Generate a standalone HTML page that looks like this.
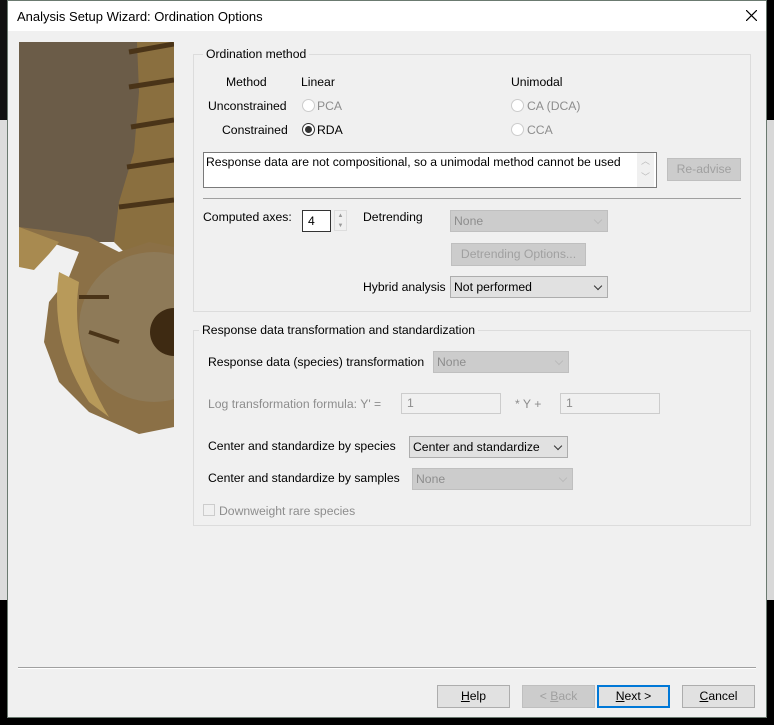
<!DOCTYPE html>
<html><head><meta charset="utf-8"><style>
*{margin:0;padding:0;box-sizing:border-box}
body{width:774px;height:725px;background:#000;position:relative;overflow:hidden;font-family:"Liberation Sans","Noto Sans CJK SC",sans-serif;font-size:12.2px;color:#000}
.a{position:absolute;white-space:nowrap}
.win{position:absolute;left:7px;top:0;width:760px;height:718px;background:#f0f0f0;border:1px solid #6b7a70}
.title{position:absolute;left:0;top:0;width:758px;height:30px;background:#fff}
.grp{position:absolute;border:1px solid #dcdcdc}
.leg{position:absolute;background:#f0f0f0;padding:0 3px;line-height:14px}
.dis{color:#8d8d8d}
.radio{position:absolute;width:13px;height:13px;border-radius:50%;border:1px solid #333;background:#fff}
.radio.d{border-color:#ccc}
.radio.on::after{content:"";position:absolute;left:2px;top:2px;width:7px;height:7px;border-radius:50%;background:#333}
.sel{position:absolute;height:22px;border:1px solid #adadad;background:#e1e1e1;line-height:20px;padding-left:3px}
.sel.d{background:#cccccc;border-color:#bfbfbf;color:#8d8d8d}
.sel::after{content:"";position:absolute;right:6px;top:6px;width:5px;height:5px;border-right:1px solid #333;border-bottom:1px solid #333;transform:rotate(45deg)}
.sel.d::after{border-color:#bbb}
.btn{position:absolute;height:23px;border:1px solid #adadad;background:#e1e1e1;text-align:center;line-height:21px}
.btn.d{background:#cccccc;border-color:#bfbfbf;color:#a0a0a0}
.inp{position:absolute;border:1px solid #ccc;background:#f0f0f0;color:#8d8d8d;line-height:19px;padding-left:5px;height:21px}
</style></head><body>
<div class="a" style="left:0;top:0;width:7px;height:360px;background:#111"></div>
<div class="a" style="left:0;top:120px;width:7px;height:480px;background:#dcdcdc"></div>
<div class="a" style="left:767px;top:120px;width:7px;height:480px;background:#d8d8d8"></div>
<div class="win">
<div class="title"></div>
<div class="a" style="left:9px;top:8px;font-size:13px">Analysis Setup Wizard: Ordination Options</div>
<svg class="a" style="left:738px;top:9px" width="11" height="11"><path d="M0 0L11 11M11 0L0 11" stroke="#000" stroke-width="1.2"/></svg>
<svg class="a" style="left:11px;top:41px" width="155" height="397" viewBox="0 0 155 397">
<rect x="0" y="0" width="155" height="200" fill="#6b5c48"/>
<path d="M118 0 L155 0 L155 205 L110 215 L95 200 L100 160 L115 110 L120 50 Z" fill="#8a6f3f"/>
<path d="M110 10 L155 2 M110 45 L155 38 M112 85 L155 78 M108 125 L155 118 M100 165 L155 158" stroke="#4a3418" stroke-width="5"/>
<path d="M0 185 L30 200 L60 210 L50 235 L30 260 L25 300 L40 340 L70 370 L120 392 L155 385 L155 205 L130 200 L100 210 L70 195 L40 190 Z" fill="#8b7046"/>
<circle cx="135" cy="285" r="75" fill="#8e7a58"/>
<circle cx="155" cy="290" r="24" fill="#3e2a12"/>
<path d="M40 230 Q30 300 70 360 L90 375 Q50 310 60 240 Z" fill="#b89a5a"/>
<path d="M0 185 L0 225 L15 228 L30 212 L40 200 Z" fill="#a88a50"/>
<path d="M60 255 L90 255 M70 290 L100 300" stroke="#4a3418" stroke-width="4"/>
</svg>
<div class="grp" style="left:185px;top:53px;width:558px;height:258px"></div>
<div class="leg" style="left:195px;top:46px">Ordination method</div>
<div class="a" style="left:218px;top:74px">Method</div>
<div class="a" style="left:293px;top:74px">Linear</div>
<div class="a" style="left:503px;top:74px">Unimodal</div>
<div class="a" style="left:200px;top:98px">Unconstrained</div>
<div class="radio d" style="left:294px;top:98px"></div><div class="a dis" style="left:309px;top:98px">PCA</div>
<div class="radio d" style="left:503px;top:98px"></div><div class="a dis" style="left:519px;top:98px">CA (DCA)</div>
<div class="a" style="left:214px;top:122px">Constrained</div>
<div class="radio on" style="left:294px;top:122px"></div><div class="a" style="left:309px;top:122px">RDA</div>
<div class="radio d" style="left:503px;top:122px"></div><div class="a dis" style="left:519px;top:122px">CCA</div>
<div class="a" style="left:195px;top:151px;width:454px;height:36px;background:#fff;border:1px solid #7a7a7a"></div>
<div class="a" style="left:198px;top:154px">Response data are not compositional, so a unimodal method cannot be used</div>
<div class="a" style="left:629px;top:152px;width:17px;height:34px;background:#f0f0f0;color:#bbb;font-size:9px;text-align:center;line-height:16px">︿<br>﹀</div>
<div class="btn d" style="left:659px;top:157px;width:74px">Re-advise</div>
<div class="a" style="left:195px;top:197px;width:538px;height:1px;background:#a0a0a0"></div>
<div class="a" style="left:195px;top:209px">Computed axes:</div>
<div class="a" style="left:294px;top:209px;width:29px;height:22px;background:#fff;border:1px solid #333;padding:3px 0 0 5px">4</div>
<div class="a" style="left:326px;top:209px;width:13px;height:21px;border:1px solid #ddd;color:#999;font-size:6px;text-align:center;line-height:10px">▲<br>▼</div>
<div class="a" style="left:355px;top:209px">Detrending</div>
<div class="sel d" style="left:442px;top:209px;width:158px">None</div>
<div class="btn d" style="left:443px;top:242px;width:135px">Detrending Options...</div>
<div class="a" style="left:355px;top:279px">Hybrid analysis</div>
<div class="sel" style="left:442px;top:275px;width:158px">Not performed</div>
<div class="grp" style="left:185px;top:329px;width:558px;height:196px"></div>
<div class="leg" style="left:191px;top:322px">Response data transformation and standardization</div>
<div class="a" style="left:200px;top:354px">Response data (species) transformation</div>
<div class="sel d" style="left:425px;top:350px;width:136px">None</div>
<div class="a dis" style="left:200px;top:396px">Log transformation formula: Y' =</div>
<div class="inp" style="left:393px;top:392px;width:100px">1</div>
<div class="a dis" style="left:507px;top:396px">* Y +</div>
<div class="inp" style="left:552px;top:392px;width:100px">1</div>
<div class="a" style="left:200px;top:438px">Center and standardize by species</div>
<div class="sel" style="left:401px;top:435px;width:159px">Center and standardize</div>
<div class="a" style="left:200px;top:470px">Center and standardize by samples</div>
<div class="sel d" style="left:404px;top:467px;width:161px">None</div>
<div class="a" style="left:195px;top:503px;width:12px;height:12px;border:1px solid #ccc;background:#f0f0f0"></div>
<div class="a dis" style="left:211px;top:503px">Downweight rare species</div>
<div class="a" style="left:10px;top:666px;width:738px;height:1px;background:#a0a0a0"></div>
<div class="a" style="left:10px;top:667px;width:738px;height:1px;background:#fff"></div>
<div class="btn" style="left:429px;top:684px;width:73px"><u>H</u>elp</div>
<div class="btn d" style="left:514px;top:684px;width:73px">&lt; <u>B</u>ack</div>
<div class="btn" style="left:589px;top:684px;width:73px;border:2px solid #0078d7;line-height:19px"><u>N</u>ext &gt;</div>
<div class="btn" style="left:674px;top:684px;width:73px"><u>C</u>ancel</div>
</div>
</body></html>
